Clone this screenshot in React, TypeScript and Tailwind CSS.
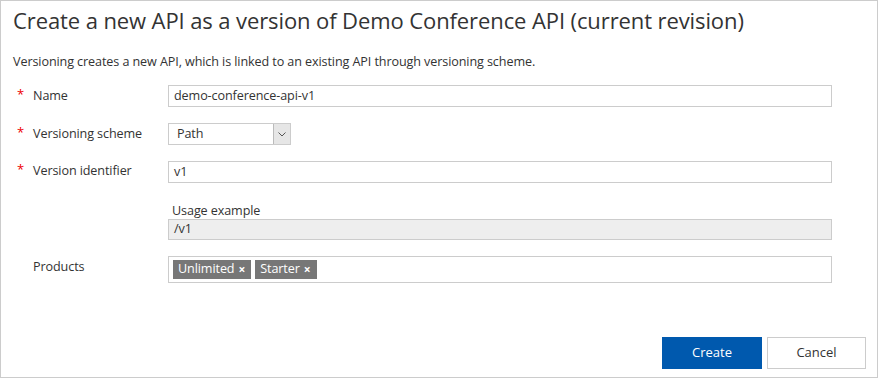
import React from "react";

const font = { fontFamily: '"Segoe UI", "Open Sans", "Noto Sans", sans-serif' };

function Req() {
  return <span className="w-[17px] shrink-0 text-[#e00] text-[13px] leading-[14px] pl-[1px]">*</span>;
}

function Tag({ label }: { label: string }) {
  return (
    <span className="h-[19px] bg-[#777777] text-white pl-[5px] pr-[6px] flex items-center gap-[4px]">
      {label}
      <span className="text-[12px] font-bold leading-none">×</span>
    </span>
  );
}

export default function App() {
  return (
    <div
      className="w-[878px] h-[378px] bg-white border border-[#cccccc] flex flex-col text-[#333]"
      style={font}
    >
      <h1 className="text-[22px] leading-[28px] text-[#333] pl-[12px] pt-[5px] tracking-[-0.1px]">
        Create a new API as a version of Demo Conference API (current revision)
      </h1>
      <p className="text-[12.6px] leading-[16px] pl-[12px] mt-[20px] tracking-[-0.1px]">
        Versioning creates a new API, which is linked to an existing API through versioning scheme.
      </p>

      <div className="flex flex-col pl-[15px] pr-[45px] mt-[15px] text-[12.6px] tracking-[-0.1px]">
        {/* Name */}
        <div className="flex items-start h-[22px]">
          <div className="w-[152px] flex items-start pt-[2px]">
            <Req />
            <span>Name</span>
          </div>
          <div className="flex-1 h-[22px] border border-[#cccccc] px-[5px] flex items-center">
            demo-conference-api-v1
          </div>
        </div>

        {/* Versioning scheme */}
        <div className="flex items-start h-[22px] mt-[16px]">
          <div className="w-[152px] flex items-start pt-[2px]">
            <Req />
            <span>Versioning scheme</span>
          </div>
          <div className="w-[123px] h-[22px] border border-[#cccccc] flex items-center justify-between">
            <span className="pl-[8px]">Path</span>
            <span className="w-[17px] h-[20px] bg-[#e6e6e6] border-l border-[#bbb] flex items-center justify-center">
              <svg width="8" height="5" viewBox="0 0 8 5">
                <path d="M0.5 0.5 L4 4 L7.5 0.5" fill="none" stroke="#555" strokeWidth="1" />
              </svg>
            </span>
          </div>
        </div>

        {/* Version identifier */}
        <div className="flex items-start h-[22px] mt-[16px]">
          <div className="w-[152px] flex items-start pt-[1px]">
            <Req />
            <span>Version identifier</span>
          </div>
          <div className="flex-1 h-[22px] border border-[#cccccc] px-[5px] flex items-center">
            v1
          </div>
        </div>

        {/* Usage example */}
        <div className="flex items-start mt-[19px]">
          <div className="w-[152px]" />
          <div className="flex-1 flex flex-col">
            <span className="pl-[4px] leading-[17px]">Usage example</span>
            <div className="h-[21px] bg-[#eeeeee] border border-[#cccccc] px-[5px] flex items-center">
              /v1
            </div>
          </div>
        </div>

        {/* Products */}
        <div className="flex items-start mt-[16px]">
          <div className="w-[152px] flex items-start pt-[2px]">
            <span className="w-[17px]" />
            <span>Products</span>
          </div>
          <div className="flex-1 h-[27px] border border-[#cccccc] flex items-center gap-[4px] pl-[4px] pr-[3px]">
            <Tag label="Unlimited" />
            <Tag label="Starter" />
          </div>
        </div>
      </div>

      <div className="flex-1" />
      <div className="flex justify-end gap-[5px] pr-[11px] pb-[8px] text-[13px]">
        <button className="w-[100px] h-[32px] bg-[#0059ae] text-white">Create</button>
        <button className="w-[99px] h-[32px] bg-white border border-[#cccccc] text-[#333]">Cancel</button>
      </div>
    </div>
  );
}
